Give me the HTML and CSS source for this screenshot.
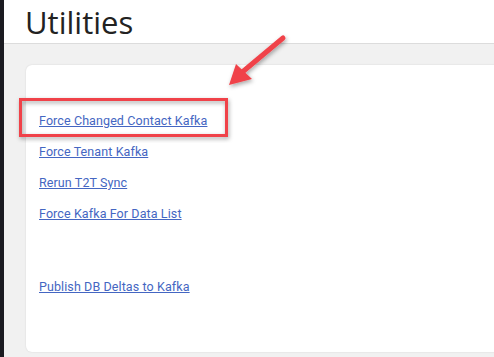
FILE: index.html
```html
<!DOCTYPE html>
<html>
<head>
<meta charset="utf-8">
<link rel="stylesheet" href="styles.css">
</head>
<body>
<div class="page">
  <div class="rail"></div>
  <div class="main">
    <header class="header"><h1 class="title">Utilities</h1></header>
    <section class="content">
      <div class="card">
        <a class="link" href="#">Force Changed Contact Kafka</a>
        <a class="link" href="#">Force Tenant Kafka</a>
        <a class="link" href="#">Rerun T2T Sync</a>
        <a class="link" href="#">Force Kafka For Data List</a>
        <a class="link spaced" href="#">Publish DB Deltas to Kafka</a>
      </div>
    </section>
  </div>
  <svg class="annot" width="494" height="357" viewBox="0 0 494 357">
    <defs>
      <filter id="sh" x="-20%" y="-20%" width="140%" height="140%">
        <feDropShadow dx="1" dy="2" stdDeviation="2" flood-color="#000" flood-opacity="0.35"/>
      </filter>
    </defs>
    <rect x="20.5" y="99.5" width="206" height="36" fill="none" stroke="#f0434a" stroke-width="3" filter="url(#sh)"/>
    <g filter="url(#sh)">
      <line x1="283" y1="38" x2="240" y2="74" stroke="#f0434a" stroke-width="5" stroke-linecap="round"/>
      <polygon points="229,85 236,64 252,79" fill="#f0434a"/>
    </g>
  </svg>
</div>
</body>
</html>
```
FILE: styles.css
```css
html, body {
  margin: 0;
  padding: 0;
  width: 494px;
  height: 357px;
  overflow: hidden;
  background: #f1f1f1;
}
.page {
  position: relative;
  display: flex;
  width: 494px;
  height: 357px;
}
.rail {
  width: 4px;
  flex: none;
  background: #1b1b21;
}
.main {
  flex: 1;
  display: flex;
  flex-direction: column;
  overflow: hidden;
  background: #f1f1f1;
}
.header {
  height: 44px;
  flex: none;
  background: #fff;
  border-bottom: 1px solid #dcdcdc;
  box-sizing: border-box;
  padding-left: 21px;
}
.title {
  margin: 0;
  font-family: "Open Sans", sans-serif;
  font-weight: 400;
  font-size: 31px;
  line-height: 44px;
  color: #222;
  letter-spacing: 0;
}
.content {
  flex: 1;
  padding: 21px 0 0 22px;
}
.card {
  width: 520px;
  height: 287px;
  box-sizing: border-box;
  background: #fff;
  border-radius: 6px;
  box-shadow: 0 0 2px rgba(0,0,0,0.12);
  padding: 40px 0 0 13px;
  display: flex;
  flex-direction: column;
  align-items: flex-start;
}
.link {
  font-family: Roboto, sans-serif;
  font-size: 12.5px;
  line-height: 31px;
  color: #4466c2;
  text-decoration: underline;
  letter-spacing: 0.1px;
}
.spaced {
  margin-top: 42px;
}
.annot {
  position: absolute;
  left: 0;
  top: 0;
  pointer-events: none;
}
```
